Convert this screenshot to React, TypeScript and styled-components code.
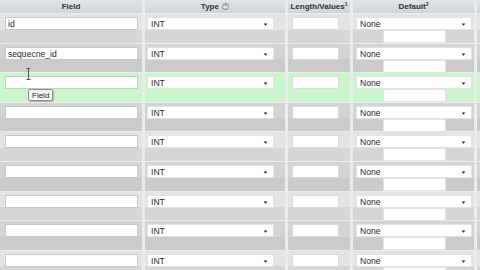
import styled, { createGlobalStyle } from "styled-components";

const GlobalStyle = createGlobalStyle`
  html, body { margin: 0; padding: 0; background: #ececec; overflow: hidden; }
  body { font-family: "Liberation Sans", Arial, sans-serif; }
`;

const rows = ["id", "sequecne_id", "", "", "", "", "", "", ""];
const HOVER_ROW = 2;

const App = () => {
  return (
    <>
      <GlobalStyle />
      <Grid>
        <HeadCell>Field</HeadCell>
        <HeadCell>
          Type <HelpIcon />
        </HeadCell>
        <HeadCell>
          Length/Values<sup>1</sup>
        </HeadCell>
        <HeadCell>
          Default<sup>2</sup>
        </HeadCell>
        <HeadCell />
        {rows.map((name, i) => {
          const tone = i === HOVER_ROW ? "hover" : i % 2 === 0 ? "odd" : "even";
          return (
            <Row key={i}>
              <Cell $tone={tone}>
                <FieldInput>{name}</FieldInput>
                {i === HOVER_ROW && (
                  <>
                    <Cursor />
                    <Tooltip>Field</Tooltip>
                  </>
                )}
              </Cell>
              <Cell $tone={tone}>
                <Select $width={127} $left={2}>
                  INT
                  <Arrow />
                </Select>
              </Cell>
              <Cell $tone={tone}>
                <LengthInput />
              </Cell>
              <Cell $tone={tone}>
                <Select $width={116} $left={3}>
                  None
                  <Arrow />
                </Select>
                <DefaultInput />
              </Cell>
              <Cell $tone={tone} />
            </Row>
          );
        })}
      </Grid>
    </>
  );
};

const HelpIcon = () => (
  <svg width="7" height="7" viewBox="0 0 10 10" style={{ marginLeft: 1, verticalAlign: -0.5 }}>
    <circle cx="5" cy="5" r="4.2" fill="#f4f4f4" stroke="#555" strokeWidth="1" />
    <path d="M3.6 3.9c0-0.9 0.6-1.4 1.4-1.4s1.4 0.5 1.4 1.2c0 0.9-1.2 1-1.2 1.9" fill="none" stroke="#444" strokeWidth="0.9" />
    <circle cx="5.2" cy="7.3" r="0.55" fill="#444" />
  </svg>
);

const Arrow = () => (
  <ArrowMark viewBox="0 0 6 4">
    <path d="M0.5 0.5h5L3 3.5z" fill="#222" />
  </ArrowMark>
);

const Cursor = () => (
  <CursorMark viewBox="0 0 5 12">
    <path d="M0.5 0.5h4M2.5 0.5v11M0.5 11.5h4" stroke="#555" strokeWidth="1" fill="none" />
  </CursorMark>
);

const Grid = styled.div`
  display: grid;
  grid-template-columns: 142px 140px 62px 121px minmax(0, 1fr);
  grid-template-rows: 13px;
  grid-auto-rows: 28.6px;
  column-gap: 3px;
  row-gap: 1px;
  width: 100%;
  background: #ececec;
`;

const Row = styled.div`
  display: contents;
`;

const HeadCell = styled.div`
  background: linear-gradient(#dfe5ea, #cdd5dc);
  color: #333;
  font-size: 8px;
  font-weight: bold;
  line-height: 13px;
  text-align: center;
  white-space: nowrap;
  sup {
    font-size: 5px;
    vertical-align: 3px;
    line-height: 0;
  }
`;

const tones = {
  odd: "linear-gradient(#e4e4e4 0 55%, #d6d6d6 55%)",
  even: "linear-gradient(#d4d4d4 0 55%, #cbcbcb 55%)",
  hover: "#c9f7c9",
};

const Cell = styled.div<{ $tone: keyof typeof tones }>`
  position: relative;
  background: ${({ $tone }) => tones[$tone]};
  padding-top: 3px;
  box-sizing: border-box;
`;

const boxBase = `
  background: #fff;
  box-sizing: border-box;
  height: 13px;
  font-size: 8.6px;
  line-height: 12px;
  color: #2a2a2a;
  white-space: nowrap;
`;

const FieldInput = styled.div`
  ${boxBase}
  margin-left: 5px;
  width: 133px;
  padding-left: 2px;
  border: 1px solid #c8c8c8;
`;

const Select = styled.div<{ $width: number; $left: number }>`
  ${boxBase}
  position: relative;
  margin-left: ${({ $left }) => $left}px;
  width: ${({ $width }) => $width}px;
  padding-left: 3px;
  border: 1px solid #e2e2e2;
`;

const ArrowMark = styled.svg`
  position: absolute;
  right: 5px;
  top: 5px;
  width: 5px;
  height: 3px;
`;

const LengthInput = styled.div`
  ${boxBase}
  margin-left: 4px;
  width: 47px;
  border: 1px solid #dadada;
`;

const DefaultInput = styled.div`
  ${boxBase}
  margin-left: 30px;
  width: 63px;
  border: 1px solid #e4e4e4;
`;

const Tooltip = styled.div`
  position: absolute;
  left: 28px;
  top: 16px;
  padding: 0 3px;
  height: 12px;
  line-height: 11px;
  font-size: 8px;
  color: #222;
  background: #f7f7f7;
  border: 1px solid #8c8c8c;
  border-radius: 2px;
  box-shadow: 1px 1px 1px rgba(0, 0, 0, 0.25);
  box-sizing: border-box;
`;

const CursorMark = styled.svg`
  position: absolute;
  left: 26px;
  top: -5px;
  width: 5px;
  height: 12px;
`;

export default App;
